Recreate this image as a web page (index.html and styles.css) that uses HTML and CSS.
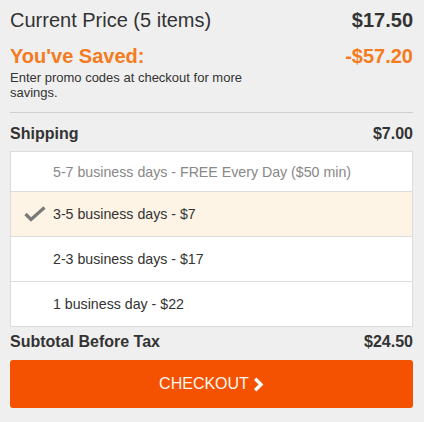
FILE: index.html
```html
<!DOCTYPE html>
<html>
<head>
<meta charset="utf-8">
<link rel="stylesheet" href="styles.css">
</head>
<body>
<div class="wrap">
  <div class="summary">
    <div class="line price">
      <span>Current Price (5 items)</span>
      <span class="amt">$17.50</span>
    </div>
    <div class="line saved">
      <span>You've Saved:</span>
      <span>-$57.20</span>
    </div>
    <p class="note">Enter promo codes at checkout for more savings.</p>
  </div>
  <div class="line head ship-head">
    <span>Shipping</span>
    <span>$7.00</span>
  </div>
  <div class="options">
    <div class="opt first disabled">5-7 business days - FREE Every Day ($50 min)</div>
    <div class="opt selected">
      <svg class="check" width="22" height="16" viewBox="0 0 22 16"><polyline points="1.5,8 7,13.5 20.5,1.5" fill="none" stroke="#7a7a7a" stroke-width="3.2" stroke-linecap="butt" stroke-linejoin="miter"/></svg>
      3-5 business days - $7
    </div>
    <div class="opt">2-3 business days - $17</div>
    <div class="opt">1 business day - $22</div>
  </div>
  <div class="line head subtotal">
    <span>Subtotal Before Tax</span>
    <span>$24.50</span>
  </div>
  <button class="checkout">CHECKOUT<svg class="chev" width="11" height="15" viewBox="0 0 11 15"><polyline points="2.2,1.8 8,7.5 2.2,13.2" fill="none" stroke="#fff" stroke-width="3.4"/></svg></button>
</div>
</body>
</html>
```
FILE: styles.css
```css
html, body {
  margin: 0;
  padding: 0;
  background: #efefef;
}
body {
  font-family: "Liberation Sans", Arial, sans-serif;
  color: #333;
}
.wrap {
  padding: 8px 11px 0 10px;
}
.summary {
  border-bottom: 1px solid #cfcfcf;
  padding-bottom: 12px;
}
.line {
  display: flex;
  justify-content: space-between;
}
.price {
  font-size: 20px;
  line-height: 24px;
}
.price .amt {
  font-weight: bold;
}
.saved {
  margin-top: 12px;
  font-size: 20px;
  line-height: 24px;
  font-weight: bold;
  color: #f47b20;
}
.note {
  margin: 2px 0 0 0;
  width: 240px;
  font-size: 13px;
  line-height: 15px;
}
.head {
  font-size: 16px;
  line-height: 20px;
  font-weight: bold;
}
.ship-head {
  height: 38px;
  box-sizing: border-box;
  padding-top: 11px;
}
.options {
  background: #fff;
  border: 1px solid #dcdcdc;
}
.opt {
  height: 44px;
  border-top: 1px solid #dcdcdc;
  display: flex;
  align-items: center;
  padding-left: 42px;
  font-size: 14.2px;
  position: relative;
}
.opt.first {
  border-top: none;
  height: 39px;
}
.disabled {
  color: #888;
}
.selected {
  background: #fdf4e6;
}
.check {
  position: absolute;
  left: 13px;
  top: 14px;
}
.subtotal {
  height: 33px;
  box-sizing: border-box;
  padding-top: 5px;
}
.checkout {
  display: flex;
  align-items: center;
  justify-content: center;
  width: 100%;
  height: 48px;
  border: none;
  border-radius: 3px;
  background: #f45100;
  color: #fff8ee;
  font-family: "Liberation Sans", Arial, sans-serif;
  font-size: 16px;
  padding: 0;
}
.chev {
  margin-left: 4px;
}
```
